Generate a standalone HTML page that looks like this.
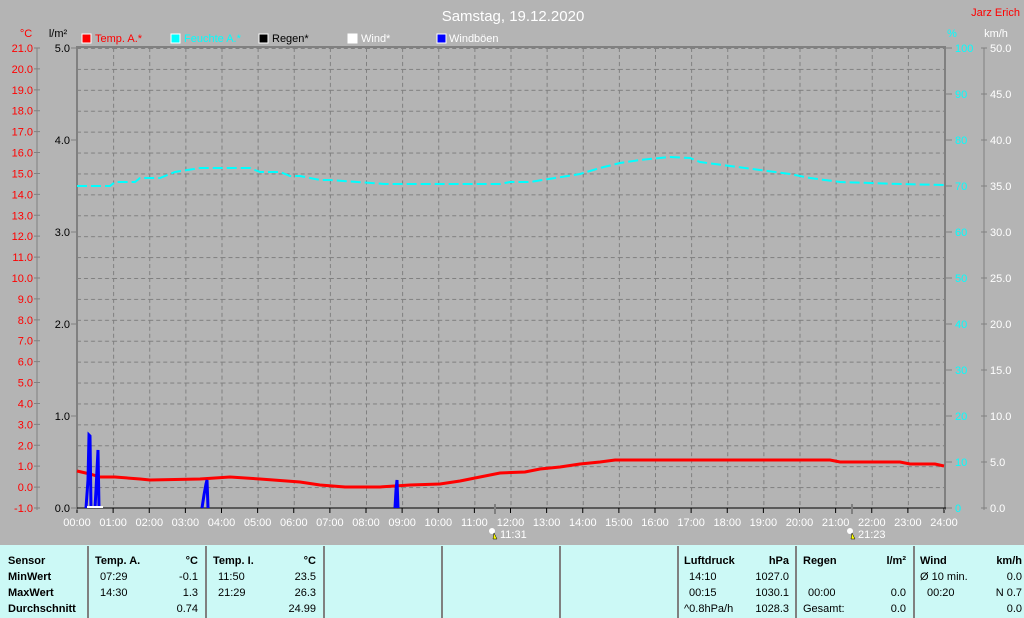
<!DOCTYPE html>
<html><head><meta charset="utf-8"><style>
body{margin:0;width:1024px;height:618px;background:#b4b4b4;overflow:hidden;font-family:"Liberation Sans",sans-serif}
svg{position:absolute;left:0;top:0}
text{font-family:"Liberation Sans",sans-serif;font-size:11px}
</style></head><body>
<svg width="1024" height="618" viewBox="0 0 1024 618">
<defs>
<pattern id="gp" patternUnits="userSpaceOnUse" x="77" y="48" width="36.125" height="20.909">
<line x1="0.5" y1="0" x2="0.5" y2="20.909" stroke="#808080" stroke-dasharray="4,3"/>
<line x1="0" y1="0.5" x2="36.125" y2="0.5" stroke="#808080" stroke-dasharray="4,3"/>
</pattern>
</defs>
<rect x="78" y="48" width="867" height="460" fill="url(#gp)"/>
<text x="513" y="21" fill="#fff" text-anchor="middle" style="font-size:15px">Samstag, 19.12.2020</text>
<text x="1020" y="16" fill="#f00" text-anchor="end">Jarz Erich</text>
<text x="26" y="37" fill="#f00" text-anchor="middle">°C</text>
<text x="58" y="37" fill="#000" text-anchor="middle">l/m²</text>
<text x="952" y="37" fill="#0ff" text-anchor="middle">%</text>
<text x="996" y="37" fill="#fff" text-anchor="middle">km/h</text>
<rect x="82" y="34" width="9" height="9" fill="#f00" stroke="#fff"/><text x="95" y="42" fill="#f00">Temp. A.*</text>
<rect x="171" y="34" width="9" height="9" fill="#0ff" stroke="#fff"/><text x="184" y="42" fill="#0ff">Feuchte A.*</text>
<rect x="259" y="34" width="9" height="9" fill="#000" stroke="#fff"/><text x="272" y="42" fill="#000">Regen*</text>
<rect x="348" y="34" width="9" height="9" fill="#fff" stroke="#fff"/><text x="361" y="42" fill="#fff">Wind*</text>
<rect x="437" y="34" width="9" height="9" fill="#00f" stroke="#fff"/><text x="449" y="42" fill="#fff">Windböen</text>

<g fill="#f00" text-anchor="end">
<text x="33" y="52">21.0</text><text x="33" y="72.9">20.0</text><text x="33" y="93.8">19.0</text><text x="33" y="114.7">18.0</text><text x="33" y="135.6">17.0</text><text x="33" y="156.5">16.0</text><text x="33" y="177.5">15.0</text><text x="33" y="198.4">14.0</text><text x="33" y="219.3">13.0</text><text x="33" y="240.2">12.0</text><text x="33" y="261.1">11.0</text><text x="33" y="282">10.0</text><text x="33" y="302.9">9.0</text><text x="33" y="323.8">8.0</text><text x="33" y="344.7">7.0</text><text x="33" y="365.6">6.0</text><text x="33" y="386.5">5.0</text><text x="33" y="407.5">4.0</text><text x="33" y="428.4">3.0</text><text x="33" y="449.3">2.0</text><text x="33" y="470.2">1.0</text><text x="33" y="491.1">0.0</text><text x="33" y="512">-1.0</text>
</g>
<g fill="#000" text-anchor="end">
<text x="70" y="512">0.0</text><text x="70" y="420">1.0</text><text x="70" y="328">2.0</text><text x="70" y="236">3.0</text><text x="70" y="144">4.0</text><text x="70" y="52">5.0</text>
</g>
<g fill="#0ff">
<text x="955" y="512">0</text><text x="955" y="466">10</text><text x="955" y="420">20</text><text x="955" y="374">30</text><text x="955" y="328">40</text><text x="955" y="282">50</text><text x="955" y="236">60</text><text x="955" y="190">70</text><text x="955" y="144">80</text><text x="955" y="98">90</text><text x="955" y="52">100</text>
</g>
<g fill="#fff">
<text x="990" y="512">0.0</text><text x="990" y="466">5.0</text><text x="990" y="420">10.0</text><text x="990" y="374">15.0</text><text x="990" y="328">20.0</text><text x="990" y="282">25.0</text><text x="990" y="236">30.0</text><text x="990" y="190">35.0</text><text x="990" y="144">40.0</text><text x="990" y="98">45.0</text><text x="990" y="52">50.0</text>
</g>
<g fill="#fff" text-anchor="middle">
<text x="77" y="526">00:00</text><text x="113.1" y="526">01:00</text><text x="149.3" y="526">02:00</text><text x="185.4" y="526">03:00</text><text x="221.5" y="526">04:00</text><text x="257.6" y="526">05:00</text><text x="293.8" y="526">06:00</text><text x="329.9" y="526">07:00</text><text x="366" y="526">08:00</text><text x="402.1" y="526">09:00</text><text x="438.3" y="526">10:00</text><text x="474.4" y="526">11:00</text><text x="510.5" y="526">12:00</text><text x="546.6" y="526">13:00</text><text x="582.8" y="526">14:00</text><text x="618.9" y="526">15:00</text><text x="655" y="526">16:00</text><text x="691.1" y="526">17:00</text><text x="727.3" y="526">18:00</text><text x="763.4" y="526">19:00</text><text x="799.5" y="526">20:00</text><text x="835.6" y="526">21:00</text><text x="871.8" y="526">22:00</text><text x="907.9" y="526">23:00</text><text x="944" y="526">24:00</text>
</g>
<!-- ticks -->
<line x1="37" y1="47.5" x2="37" y2="509" stroke="#808080" stroke-width="6" stroke-dasharray="1,19.909"/>
<line x1="74" y1="47.5" x2="74" y2="509" stroke="#808080" stroke-width="6" stroke-dasharray="1,91"/>
<line x1="949" y1="47.5" x2="949" y2="509" stroke="#808080" stroke-width="6" stroke-dasharray="1,45"/>
<line x1="984" y1="47.5" x2="984" y2="509" stroke="#808080" stroke-width="6" stroke-dasharray="1,45"/>
<line x1="76.5" y1="510.5" x2="946" y2="510.5" stroke="#000" stroke-width="5" stroke-dasharray="1,35.125"/>
<line x1="37" y1="48" x2="37" y2="510" stroke="#808080"/>
<line x1="984" y1="48" x2="984" y2="510" stroke="#808080"/>
<line x1="77" y1="47" x2="77" y2="510" stroke="#808080" stroke-width="2"/>
<line x1="76" y1="47" x2="946" y2="47" stroke="#808080" stroke-width="2"/>
<line x1="945" y1="47" x2="945" y2="510" stroke="#808080" stroke-width="2"/>
<line x1="77" y1="508" x2="946" y2="508" stroke="#000"/>
<polyline fill="none" stroke="#0ff" stroke-width="2" stroke-dasharray="10,4" points="77,186 110,186 115,182 135,182 140,178 160,178 175,172 200,168 250,168 260,172 280,172 290,176 300,176 320,180 330,180 385,184 500,184 510,182 530,182 555,178 580,174 600,168 620,163 640,160 670,157 690,158 700,162 730,166 760,170 790,174 810,178 840,182 900,184 944,185"/>
<polyline fill="none" stroke="#f00" stroke-width="3" points="77,471 90,474 100,477 115,477 140,479 150,480 200,479 230,477 260,479 300,482 320,485 345,487 380,487 410,485 440,484 460,481 480,477 500,473 525,472 540,469 560,467 580,464 600,462 615,460 700,460 830,460 840,462 900,462 910,464 935,464 944,466"/>
<g fill="none" stroke="#00f" stroke-width="3">
<polyline points="86,508 88,480 89,435 90,436 91,508"/>
<polyline points="95,508 96,490 97,470 98,450 99,508"/>
<polyline points="202,508 204,495 206,484 207,480 208,508"/>
<polyline points="395,508 396,490 397,480 398,508"/>
</g>
<line x1="87" y1="507" x2="103" y2="507" stroke="#fff" stroke-width="2"/>
<line x1="495" y1="504" x2="495" y2="514" stroke="#808080" stroke-width="2"/>
<line x1="852" y1="504" x2="852" y2="514" stroke="#808080" stroke-width="2"/>
<circle cx="492" cy="531" r="3" fill="#fff"/><path d="M494 533l3 6h-4z" fill="#ff0" stroke="#000" stroke-width=".5"/>
<text x="500" y="538" fill="#fff">11:31</text>
<circle cx="850" cy="531" r="3" fill="#fff"/><path d="M852 533l3 6h-4z" fill="#ff0" stroke="#000" stroke-width=".5"/>
<text x="858" y="538" fill="#fff">21:23</text>
<rect x="0" y="545" width="1024" height="73" fill="#ccf9f6"/>
<g stroke="#808080" stroke-width="2">
<line x1="88" y1="546" x2="88" y2="618"/><line x1="206" y1="546" x2="206" y2="618"/><line x1="324" y1="546" x2="324" y2="618"/><line x1="442" y1="546" x2="442" y2="618"/><line x1="560" y1="546" x2="560" y2="618"/><line x1="678" y1="546" x2="678" y2="618"/><line x1="796" y1="546" x2="796" y2="618"/><line x1="914" y1="546" x2="914" y2="618"/>
</g>
<g fill="#000" style="font-weight:bold">
<text x="8" y="564">Sensor</text><text x="8" y="580">MinWert</text><text x="8" y="596">MaxWert</text><text x="8" y="612">Durchschnitt</text>
<text x="95" y="564">Temp. A.</text><text x="198" y="564" text-anchor="end">°C</text>
<text x="213" y="564">Temp. I.</text><text x="316" y="564" text-anchor="end">°C</text>
<text x="684" y="564">Luftdruck</text><text x="789" y="564" text-anchor="end">hPa</text>
<text x="803" y="564">Regen</text><text x="906" y="564" text-anchor="end">l/m²</text>
<text x="920" y="564">Wind</text><text x="1022" y="564" text-anchor="end">km/h</text>
</g>
<g fill="#000">
<text x="100" y="580">07:29</text><text x="198" y="580" text-anchor="end">-0.1</text>
<text x="100" y="596">14:30</text><text x="198" y="596" text-anchor="end">1.3</text>
<text x="198" y="612" text-anchor="end">0.74</text>
<text x="218" y="580">11:50</text><text x="316" y="580" text-anchor="end">23.5</text>
<text x="218" y="596">21:29</text><text x="316" y="596" text-anchor="end">26.3</text>
<text x="316" y="612" text-anchor="end">24.99</text>
<text x="689" y="580">14:10</text><text x="789" y="580" text-anchor="end">1027.0</text>
<text x="689" y="596">00:15</text><text x="789" y="596" text-anchor="end">1030.1</text>
<text x="684" y="612">^0.8hPa/h</text><text x="789" y="612" text-anchor="end">1028.3</text>
<text x="808" y="596">00:00</text><text x="906" y="596" text-anchor="end">0.0</text>
<text x="803" y="612">Gesamt:</text><text x="906" y="612" text-anchor="end">0.0</text>
<text x="920" y="580">Ø 10 min.</text><text x="1022" y="580" text-anchor="end">0.0</text>
<text x="927" y="596">00:20</text><text x="1022" y="596" text-anchor="end">N 0.7</text>
<text x="1022" y="612" text-anchor="end">0.0</text>
</g>
</svg>
</body></html>
